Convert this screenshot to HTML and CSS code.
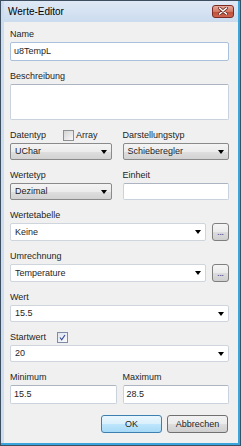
FILE: index.html
```html
<!DOCTYPE html>
<html lang="de">
<head>
    <meta charset="UTF-8">
    <meta name="viewport" content="width=device-width, initial-scale=1.0">
    <title>Werte-Editor</title>
    <link rel="stylesheet" href="styles.css">
</head>
<body>
    <div class="window">
        <div class="titlebar">
            <span class="title">Werte-Editor</span>
            <span class="close">
                <svg width="10" height="8" viewBox="0 0 10 8">
                    <path d="M1.5 1 L8.5 7 M8.5 1 L1.5 7" stroke="#6b2a22" stroke-width="3" stroke-linecap="round"/>
                    <path d="M1.5 1 L8.5 7 M8.5 1 L1.5 7" stroke="#fff" stroke-width="1.6" stroke-linecap="round"/>
                </svg>
            </span>
        </div>
        <div class="client">
            <div class="field first">
                <div class="label">Name</div>
                <div class="textbox name">u8TempL</div>
            </div>
            <div class="field">
                <div class="label">Beschreibung</div>
                <div class="textbox memo"></div>
            </div>
            <div class="field cols">
                <div class="col">
                    <div class="label row-label">Datentyp
                        <span class="check array"></span><span>Array</span>
                    </div>
                    <div class="combo gray narrow">UChar<span class="arrow"></span></div>
                </div>
                <div class="col">
                    <div class="label">Darstellungstyp</div>
                    <div class="combo gray">Schieberegler<span class="arrow"></span></div>
                </div>
            </div>
            <div class="field cols">
                <div class="col">
                    <div class="label">Wertetyp</div>
                    <div class="combo gray narrow">Dezimal<span class="arrow"></span></div>
                </div>
                <div class="col">
                    <div class="label">Einheit</div>
                    <div class="textbox short"></div>
                </div>
            </div>
            <div class="field">
                <div class="label">Wertetabelle</div>
                <div class="picker">
                    <div class="combo white tall">Keine<span class="arrow"></span></div>
                    <div class="dots">...</div>
                </div>
            </div>
            <div class="field">
                <div class="label">Umrechnung</div>
                <div class="picker">
                    <div class="combo white tall">Temperature<span class="arrow"></span></div>
                    <div class="dots">...</div>
                </div>
            </div>
            <div class="field">
                <div class="label">Wert</div>
                <div class="combo white">15.5<span class="arrow"></span></div>
            </div>
            <div class="field">
                <div class="label row-label">Startwert
                    <span class="check checked">
                        <svg width="9" height="9" viewBox="0 0 9 9">
                            <path d="M2 4.5 L3.7 6.8 L7 2" fill="none" stroke="#3a4f9a" stroke-width="1.2"/>
                        </svg>
                    </span>
                </div>
                <div class="combo white">20<span class="arrow"></span></div>
            </div>
            <div class="field cols">
                <div class="col">
                    <div class="label">Minimum</div>
                    <div class="textbox">15.5</div>
                </div>
                <div class="col">
                    <div class="label">Maximum</div>
                    <div class="textbox">28.5</div>
                </div>
            </div>
            <div class="buttons">
                <div class="button default">OK</div>
                <div class="button">Abbrechen</div>
            </div>
        </div>
    </div>
</body>
</html>
```
FILE: styles.css
```css
body {
    margin: 0;
    font-family: "Liberation Sans", Arial, sans-serif;
    font-size: 9px;
    color: #1e1e1e;
    background: #fff;
}
.window {
    width: 241px;
    height: 446px;
    box-sizing: border-box;
    display: flex;
    flex-direction: column;
    border: 1px solid #3d4e61;
    padding: 0 2px 2px 3px;
    background: #cddcee;
    box-shadow: inset -2px -2px 0 #3aa4dc;
}
.titlebar {
    height: 21px;
    display: flex;
    align-items: center;
    padding-left: 4px;
    background: linear-gradient(#dfe9f5, #cbdcef);
}
.title {
    font-size: 10px;
    color: #000;
    flex: 1;
}
.close {
    width: 22px;
    height: 13px;
    margin-right: 4px;
    margin-top: -1px;
    box-sizing: border-box;
    border: 1px solid #7d2b22;
    border-radius: 3px;
    background: linear-gradient(#e6ab9c, #d47866 50%, #bf4d39 51%, #cd6550);
    display: flex;
    align-items: center;
    justify-content: center;
}
.client {
    flex: 1;
    background: #f0f0f0;
    padding: 7px 9px 0 6px;
}
.field {
    margin-top: 10px;
}
.field.first {
    margin-top: 0;
}
.label {
    line-height: 11px;
    height: 11px;
    margin-bottom: 2px;
    white-space: nowrap;
}
.row-label {
    display: flex;
    align-items: center;
}
.cols {
    display: grid;
    grid-template-columns: 1fr 1fr;
    column-gap: 6px;
}
.textbox {
    height: 19px;
    box-sizing: border-box;
    background: #fff;
    border: 1px solid #c9d2dd;
    border-top-color: #abb4c0;
    border-radius: 2px;
    padding-left: 3px;
    line-height: 17px;
}
.textbox.name {
    border-color: #a9c1dc;
}
.textbox.memo {
    height: 36px;
}
.textbox.short {
    height: 17px;
}
.combo {
    position: relative;
    height: 17px;
    box-sizing: border-box;
    padding-left: 3px;
    line-height: 15px;
    border-radius: 2px;
}
.combo.gray {
    border: 1px solid #8a8a8a;
    background: linear-gradient(#f4f4f4, #ececec 50%, #dfdfdf 51%, #d2d2d2);
    padding-left: 4px;
}
.combo.narrow {
    width: 102px;
}
.combo.white {
    background: #fff;
    border: 1px solid #cfd5dc;
    padding-left: 4px;
}
.combo.tall {
    height: 18px;
    line-height: 16px;
}
.arrow {
    position: absolute;
    right: 4px;
    top: 50%;
    margin-top: -2px;
    border-top: 4px solid #000;
    border-left: 3px solid transparent;
    border-right: 3px solid transparent;
}
.picker {
    display: flex;
    gap: 6px;
}
.picker .combo {
    flex: 1;
}
.dots {
    width: 17px;
    height: 18px;
    box-sizing: border-box;
    border: 1px solid #7f7f7f;
    border-radius: 3px;
    background: linear-gradient(#f5f5f5, #ebebeb 50%, #dddddd 51%, #cfcfcf);
    color: #4a5aa0;
    font-size: 8px;
    text-align: center;
    line-height: 17px;
    font-weight: bold;
}
.check {
    width: 11px;
    height: 11px;
    box-sizing: border-box;
    border: 1px solid #8e8f8f;
    background: linear-gradient(135deg, #d4d4d4, #f8f8f8);
    display: inline-flex;
    align-items: center;
    justify-content: center;
}
.check.array {
    margin-left: 17px;
    margin-right: 2px;
}
.check.checked {
    margin-left: 11px;
    border-color: #7f8ca6;
    background: linear-gradient(135deg, #dfe4ee, #fafbfd);
}
.buttons {
    display: flex;
    justify-content: flex-end;
    gap: 5px;
    margin-top: 11px;
    padding-right: 1px;
}
.button {
    width: 61px;
    height: 18px;
    box-sizing: border-box;
    border: 1px solid #707070;
    border-radius: 3px;
    background: linear-gradient(#f2f2f2, #ebebeb 50%, #dddddd 51%, #cfcfcf);
    text-align: center;
    line-height: 16px;
}
.button.default {
    border-color: #3c7fb1;
    background: linear-gradient(#eaf6fd, #d9f0fc 50%, #bee6fd 51%, #a7d9f5);
}
```
